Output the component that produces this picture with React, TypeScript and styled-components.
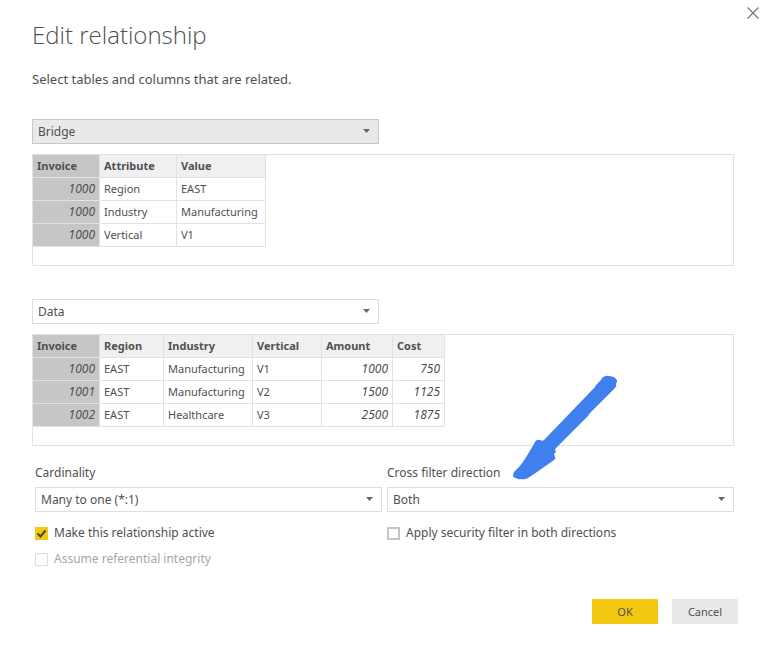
import React, { useId, useState } from "react";
import styled, { createGlobalStyle } from "styled-components";

const GlobalStyle = createGlobalStyle`
  *, *::before, *::after { box-sizing: border-box; }
  body {
    margin: 0;
    background: #fff;
    color: #505050;
    font-family: "Noto Sans", "Open Sans", sans-serif;
    font-size: 12px;
  }
  button, select, input { font: inherit; color: inherit; }
`;

const Dialog = styled.main`
  position: relative;
  display: flex;
  flex-direction: column;
  padding: 18px 34px 24px 32px;
`;

const CloseButton = styled.button`
  position: absolute;
  top: 5px;
  right: 7px;
  display: grid;
  place-items: center;
  width: 16px;
  height: 16px;
  padding: 0;
  border: 0;
  background: none;
`;

const Title = styled.h1`
  margin: 0;
  font-family: "Open Sans", "Noto Sans", sans-serif;
  font-size: 24px;
  font-weight: 300;
  line-height: 34px;
`;

const Intro = styled.p`
  margin: 18px 0 30px;
  font-size: 13px;
  line-height: 19px;
`;

const TableSection = styled.section`
  display: flex;
  flex-direction: column;
  gap: 10px;
  margin-bottom: 33px;

  & + & { margin-bottom: 18px; }
`;

const SelectBox = styled.div<{ $short?: boolean }>`
  position: relative;
  width: ${(p) => (p.$short ? "347px" : "100%")};
  max-width: 100%;
`;

const Select = styled.select<{ $filled?: boolean }>`
  appearance: none;
  display: block;
  width: 100%;
  height: 25px;
  padding: 0 24px 0 5px;
  border: 1px solid ${(p) => (p.$filled ? "#c8c8c8" : "#dedede")};
  border-radius: 0;
  background: ${(p) => (p.$filled ? "#e9e9e9" : "#fff")};
  font-size: 12px;
`;

const Caret = styled.svg`
  position: absolute;
  top: 10px;
  right: 9px;
  pointer-events: none;
`;

const Preview = styled.div`
  min-height: 112px;
  overflow-x: auto;
  border: 1px solid #e2e2e2;
`;

const Table = styled.table`
  table-layout: fixed;
  width: 0;
  border-collapse: separate;
  border-spacing: 0;
  line-height: 16px;
`;

const Column = styled.col<{ $width: number }>`
  width: ${(p) => p.$width}px;
`;

const cell = `
  height: 23px;
  padding: 0 4px;
  border-right: 1px solid #e2e2e2;
  border-bottom: 1px solid #e2e2e2;
  white-space: nowrap;
`;

const HeadCell = styled.th<{ $key?: boolean }>`
  ${cell}
  background: ${(p) => (p.$key ? "#c6c6c6" : "#f0f0f0")};
  font-size: 11px;
  font-weight: 700;
  text-align: left;
`;

const Cell = styled.td<{ $key?: boolean; $numeric?: boolean }>`
  ${cell}
  background: ${(p) => (p.$key ? "#c6c6c6" : "#fff")};
  font-size: ${(p) => (p.$numeric ? "12px" : "11px")};
  font-style: ${(p) => (p.$numeric ? "italic" : "normal")};
  text-align: ${(p) => (p.$numeric ? "right" : "left")};
`;

const Options = styled.div`
  display: grid;
  grid-template-columns: 1fr 1fr;
  gap: 5px;
  margin-left: 3px;
`;

const OptionGroup = styled.div`
  position: relative;
  display: flex;
  flex-direction: column;
`;

const FieldLabel = styled.label`
  margin-bottom: 5px;
  line-height: 18px;
`;

const CheckLabel = styled.label<{ $disabled?: boolean }>`
  display: flex;
  align-items: center;
  gap: 6px;
  margin-top: 12px;
  line-height: 18px;
  color: ${(p) => (p.$disabled ? "#a6a6a6" : "inherit")};

  & + & { margin-top: 8px; }
`;

const Checkbox = styled.input`
  appearance: none;
  width: 13px;
  height: 13px;
  margin: 0;
  border: 2px solid #c4c4c4;
  background: #fff;

  &:disabled { border: 1px solid #dedede; }
  &:checked { border-color: #f2c811; background: #f2c811; }
`;

const BoxArea = styled.span`
  position: relative;
  display: flex;
`;

const Tick = styled.svg`
  position: absolute;
  inset: 0;
  pointer-events: none;
`;

const Pointer = styled.svg`
  position: absolute;
  left: 126px;
  top: -89px;
  pointer-events: none;
`;

const Footer = styled.footer`
  display: flex;
  justify-content: flex-end;
  gap: 14px;
  margin: 31px -4px 0 0;
`;

const Action = styled.button<{ $primary?: boolean }>`
  width: 66px;
  height: 25px;
  padding: 0;
  border: 0;
  background: ${(p) => (p.$primary ? "#f2c811" : "#e9e9e9")};
  font-size: 11px;
`;

type PickerProps = {
  id?: string;
  label?: string;
  options: string[];
  short?: boolean;
  filled?: boolean;
};

function Picker({ id, label, options, short, filled }: PickerProps) {
  return (
    <SelectBox $short={short}>
      <Select id={id} aria-label={label} $filled={filled}>
        {options.map((o) => (
          <option key={o}>{o}</option>
        ))}
      </Select>
      <Caret width="7" height="4" viewBox="0 0 7 4" aria-hidden="true">
        <path d="M0 0h7L3.5 4z" fill="#666" />
      </Caret>
    </SelectBox>
  );
}

type DataColumn = { name: string; width: number; numeric?: boolean };

function DataPreview({ columns, rows }: { columns: DataColumn[]; rows: string[][] }) {
  return (
    <Preview>
      <Table>
        <colgroup>
          {columns.map((c) => (
            <Column key={c.name} $width={c.width} />
          ))}
        </colgroup>
        <thead>
          <tr>
            {columns.map((c, i) => (
              <HeadCell key={c.name} scope="col" $key={i === 0}>
                {c.name}
              </HeadCell>
            ))}
          </tr>
        </thead>
        <tbody>
          {rows.map((row, r) => (
            <tr key={r}>
              {row.map((value, i) => (
                <Cell key={i} $key={i === 0} $numeric={columns[i].numeric}>
                  {value}
                </Cell>
              ))}
            </tr>
          ))}
        </tbody>
      </Table>
    </Preview>
  );
}

type CheckProps = { text: string; initial?: boolean; disabled?: boolean };

function Check({ text, initial = false, disabled }: CheckProps) {
  const [checked, setChecked] = useState(initial);
  const id = useId();
  return (
    <CheckLabel htmlFor={id} $disabled={disabled}>
      <BoxArea>
        <Checkbox
          id={id}
          type="checkbox"
          checked={checked}
          disabled={disabled}
          onChange={(e) => setChecked(e.target.checked)}
        />
        {checked && (
          <Tick width="13" height="13" viewBox="0 0 13 13" aria-hidden="true">
            <path d="M2.5 6.5l3 3L10.5 3.5" fill="none" stroke="#444" strokeWidth="2" />
          </Tick>
        )}
      </BoxArea>
      {text}
    </CheckLabel>
  );
}

const bridgeColumns: DataColumn[] = [
  { name: "Invoice", width: 67, numeric: true },
  { name: "Attribute", width: 77 },
  { name: "Value", width: 89 },
];
const bridgeRows = [
  ["1000", "Region", "EAST"],
  ["1000", "Industry", "Manufacturing"],
  ["1000", "Vertical", "V1"],
];
const dataColumns: DataColumn[] = [
  { name: "Invoice", width: 67, numeric: true },
  { name: "Region", width: 64 },
  { name: "Industry", width: 89 },
  { name: "Vertical", width: 69 },
  { name: "Amount", width: 71, numeric: true },
  { name: "Cost", width: 52, numeric: true },
];
const dataRows = [
  ["1000", "EAST", "Manufacturing", "V1", "1000", "750"],
  ["1001", "EAST", "Manufacturing", "V2", "1500", "1125"],
  ["1002", "EAST", "Healthcare", "V3", "2500", "1875"],
];

export default function App() {
  return (
    <>
      <GlobalStyle />
      <Dialog>
        <CloseButton aria-label="Close">
          <svg width="12" height="12" viewBox="0 0 12 12" aria-hidden="true">
            <path d="M.5.5l11 11M11.5.5l-11 11" stroke="#777" strokeWidth="1.2" />
          </svg>
        </CloseButton>
        <Title>Edit relationship</Title>
        <Intro>Select tables and columns that are related.</Intro>

        <TableSection>
          <Picker label="First table" options={["Bridge", "Data"]} short filled />
          <DataPreview columns={bridgeColumns} rows={bridgeRows} />
        </TableSection>
        <TableSection>
          <Picker label="Second table" options={["Data", "Bridge"]} short />
          <DataPreview columns={dataColumns} rows={dataRows} />
        </TableSection>

        <Options>
          <OptionGroup>
            <FieldLabel htmlFor="cardinality">Cardinality</FieldLabel>
            <Picker id="cardinality" options={["Many to one (*:1)", "One to one (1:1)"]} />
            <Check text="Make this relationship active" initial />
            <Check text="Assume referential integrity" disabled />
          </OptionGroup>
          <OptionGroup>
            <FieldLabel htmlFor="direction">Cross filter direction</FieldLabel>
            <Picker id="direction" options={["Both", "Single"]} />
            <Check text="Apply security filter in both directions" />
            <Pointer width="105" height="106" viewBox="0 0 105 106" aria-hidden="true">
              <path
                d="M0 100Q0 103 3 103Q5 105 8 104Q11 105 15 103L24 97 41 85Q43 84 42 82L41 79 43 77 42 74 75 41 77 38 102 13Q104 11 103 9Q105 6 103 4Q101 1 98 1.5Q95 0 91 1.5Q89 2 88 5L83 10 82 12 31 65 29 66Q27 64 24 65Q22 66 21 69L12 84Q7 92 1 97z"
                fill="#3f80ee"
              />
            </Pointer>
          </OptionGroup>
        </Options>

        <Footer>
          <Action $primary>OK</Action>
          <Action>Cancel</Action>
        </Footer>
      </Dialog>
    </>
  );
}
